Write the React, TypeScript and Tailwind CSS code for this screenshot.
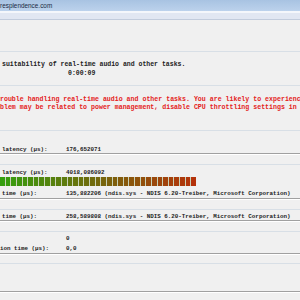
import React from "react";

const light = "h-px bg-[#d8dfe6]";

function Etched() {
  return (
    <div>
      <div className="h-px bg-[#a0a0a0]" />
      <div className="h-px bg-white" />
    </div>
  );
}

function Row({ label, value, className = "" }: { label: string; value: string; className?: string }) {
  return (
    <div className={"flex h-[8px] items-end text-[5.85px] leading-[7px] whitespace-nowrap " + className}>
      <span className="w-[66px] shrink-0 pl-[2px]">{label}</span>
      <span>{value}</span>
    </div>
  );
}

function Bar() {
  const n = 35;
  const segs = Array.from({ length: n }, (_, i) => {
    const t = i / (n - 1);
    const r = Math.round(52 + (180 - 52) * t);
    const g = Math.round(158 + (50 - 158) * t);
    const b = Math.round(14 + (10 - 14) * t);
    return `rgb(${r},${g},${b})`;
  });
  return (
    <div className="flex h-[9px] w-[196px] gap-px bg-[#c8d2b8]">
      {segs.map((c, i) => (
        <div key={i} className="h-full flex-1" style={{ background: c }} />
      ))}
    </div>
  );
}

export default function App() {
  return (
    <div className="w-[300px] h-[300px] overflow-hidden bg-[#f0f0f0] text-[#222] font-['Liberation_Mono',monospace]">
      {/* window title */}
      <div className="h-[11px] bg-gradient-to-b from-[#a8c3e2] to-[#bcd2ec] font-['Liberation_Sans',sans-serif] text-[6.4px] leading-[11px] text-[#1b2b44] whitespace-nowrap">
        resplendence.com
      </div>
      <div className="h-[2px] bg-[#f4f7fb]" />
      <div className="h-[6px] bg-[#e1e7f2]" />
      <div className="h-px bg-[#c2ccdc]" />

      <div className="h-[31px]" />
      <div className={light} />

      {/* conclusion header */}
      <div className="h-[33px] pt-[8px] text-[6.5px] font-bold whitespace-nowrap">
        <div className="h-[9px] leading-[10px] pl-[2px]">suitability of real-time audio and other tasks.</div>
        <div className="h-[9px] leading-[10px] pl-[68px]">0:00:09</div>
      </div>
      <div className={light} />

      {/* red conclusion */}
      <div className="h-[44px] pt-[10px] text-[6.6px] font-bold text-[#e41b1b] whitespace-nowrap overflow-hidden">
        <div className="h-[8px] leading-[8px]">rouble handling real-time audio and other tasks. You are likely to experience</div>
        <div className="h-[8px] leading-[8px]">blem may be related to power management, disable CPU throttling settings in</div>
      </div>
      <div className={light} />

      <div className="h-[22px] pt-[14px] font-bold">
        <Row label="latency (µs):" value="176,652071" />
      </div>
      <Etched />
      <div className="h-[9px]" />
      <div className={light} />

      <div className="h-[33px] pt-[3px] font-bold">
        <Row label="latency (µs):" value="4018,086092" />
        <div className="mt-[1px]">
          <Bar />
        </div>
        <Row className="mt-[3px]" label="time (µs):" value="135,882206 (ndis.sys - NDIS 6.20-Treiber, Microsoft Corporation)" />
      </div>
      <Etched />
      <div className="h-[9px]" />
      <div className={light} />

      <div className="h-[10px] pt-[2px] font-bold">
        <Row label="time (µs):" value="258,589808 (ndis.sys - NDIS 6.20-Treiber, Microsoft Corporation)" />
      </div>
      <Etched />
      <div className="h-[9px]" />
      <div className={light} />

      <div className="h-[21px] pt-[2px] font-bold">
        <Row label="" value="0" />
        <Row className="mt-[2px] [&>span:first-child]:pl-0" label="ion time (µs):" value="0,0" />
      </div>
      <Etched />
      <div className="h-[8px]" />
      <div className={light} />
      <div className="h-[27px]" />
      <Etched />
    </div>
  );
}
